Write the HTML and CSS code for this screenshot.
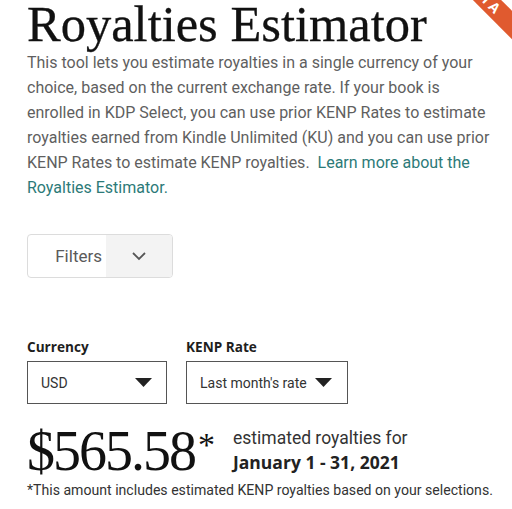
FILE: index.html
```html
<!DOCTYPE html>
<html lang="en">
<head>
<meta charset="utf-8">
<title>Royalties Estimator</title>
<link rel="stylesheet" href="styles.css">
</head>
<body>
<div class="ribbon"><span>BETA</span></div>
<main class="page">
  <h1 class="title">Royalties Estimator</h1>
  <p class="intro">This tool lets you estimate royalties in a single currency of your choice, based on the current exchange rate. If your book is enrolled in KDP Select, you can use prior KENP Rates to estimate royalties earned from Kindle Unlimited (KU) and you can use prior KENP Rates to estimate KENP royalties. <a class="link" href="#">Learn more about the Royalties Estimator.</a></p>

  <div class="filters">
    <span class="filters-label">Filters</span>
    <span class="filters-toggle">
      <svg width="16" height="10" viewBox="0 0 16 10"><path d="M2 2 L8 8 L14 2" fill="none" stroke="#555" stroke-width="1.8"/></svg>
    </span>
  </div>

  <div class="controls">
    <div class="field">
      <label class="field-label">Currency</label>
      <div class="select select-currency">
        <span>USD</span>
        <svg width="17" height="9" viewBox="0 0 17 9"><path d="M0 0 H17 L8.5 9 Z" fill="#222"/></svg>
      </div>
    </div>
    <div class="field">
      <label class="field-label">KENP Rate</label>
      <div class="select select-rate">
        <span>Last month's rate</span>
        <svg width="17" height="9" viewBox="0 0 17 9"><path d="M0 0 H17 L8.5 9 Z" fill="#222"/></svg>
      </div>
    </div>
  </div>

  <div class="result">
    <div class="amount">$565.58<sup class="star">*</sup></div>
    <div class="period">
      <div class="period-caption">estimated royalties for</div>
      <div class="period-dates">January 1 - 31, 2021</div>
    </div>
  </div>
  <p class="footnote">*This amount includes estimated KENP royalties based on your selections.</p>
</main>
</body>
</html>
```

FILE: styles.css
```css
html, body {
  margin: 0;
  padding: 0;
  background: #fff;
  overflow: hidden;
}
body {
  width: 512px;
  height: 509px;
  position: relative;
  font-family: Roboto, "Noto Sans", sans-serif;
}
.page {
  padding-left: 27px;
}
.title {
  margin: -4px 0 -3px;
  font-family: "Liberation Serif", serif;
  font-weight: 400;
  font-size: 50.5px;
  line-height: 57px;
  color: #111;
  -webkit-text-stroke: 0.3px #111;
}
.intro {
  margin: 0;
  width: 464px;
  font-size: 16px;
  line-height: 25px;
  color: #5f5f5f;
}
.link {
  color: #2c7a78;
  text-decoration: none;
  margin-left: 4px;
}
.filters {
  margin-top: 34px;
  display: flex;
  width: 144px;
  height: 42px;
  border: 1px solid #dcdcdc;
  border-radius: 4px;
  overflow: hidden;
}
.filters-label {
  width: 78px;
  display: flex;
  align-items: center;
  justify-content: flex-end;
  padding-right: 4px;
  box-sizing: border-box;
  font-size: 17px;
  color: #5a5a5a;
}
.filters-toggle {
  flex: 1;
  background: #f3f3f3;
  display: flex;
  align-items: center;
  justify-content: center;
}
.controls {
  margin-top: 59px;
  display: flex;
  gap: 19px;
}
.field {
  display: flex;
  flex-direction: column;
  gap: 4px;
}
.field-label {
  font-family: "Open Sans", sans-serif;
  font-weight: 700;
  font-size: 13.6px;
  line-height: 20px;
  color: #1e1e1e;
}
.select {
  box-sizing: border-box;
  height: 43px;
  border: 1px solid #555;
  display: flex;
  align-items: center;
  justify-content: space-between;
  font-size: 14px;
  color: #333;
}
.select-currency {
  width: 140px;
  padding: 0 14px 0 13px;
}
.select-rate {
  width: 162px;
  padding: 0 15px 0 13px;
}
.result {
  margin-top: 21px;
  display: flex;
  align-items: flex-start;
}
.amount {
  font-family: "Liberation Serif", serif;
  font-size: 56px;
  line-height: 52px;
  color: #111;
  letter-spacing: -2px;
  width: 206px;
  white-space: nowrap;
}
.star {
  font-size: 34px;
  vertical-align: top;
  line-height: 40px;
  margin-left: 3px;
  letter-spacing: 0;
}
.period {
  line-height: 24px;
  padding-top: 1px;
}
.period-caption {
  font-size: 17.5px;
  color: #333;
}
.period-dates {
  font-family: "Open Sans", sans-serif;
  font-weight: 700;
  font-size: 17.5px;
  color: #222;
}
.footnote {
  margin: 3px 0 0;
  font-size: 14.1px;
  line-height: 20px;
  color: #333;
}
.ribbon {
  position: absolute;
  top: 0;
  right: 0;
  width: 60px;
  height: 60px;
  overflow: hidden;
}
.ribbon span {
  position: absolute;
  top: -13px;
  left: -23px;
  width: 110px;
  height: 20px;
  line-height: 20px;
  background: #e05a2f;
  color: #fff;
  font-family: "Open Sans", sans-serif;
  font-weight: 700;
  font-size: 14px;
  letter-spacing: 2px;
  text-align: center;
  transform: rotate(45deg);
}
```
